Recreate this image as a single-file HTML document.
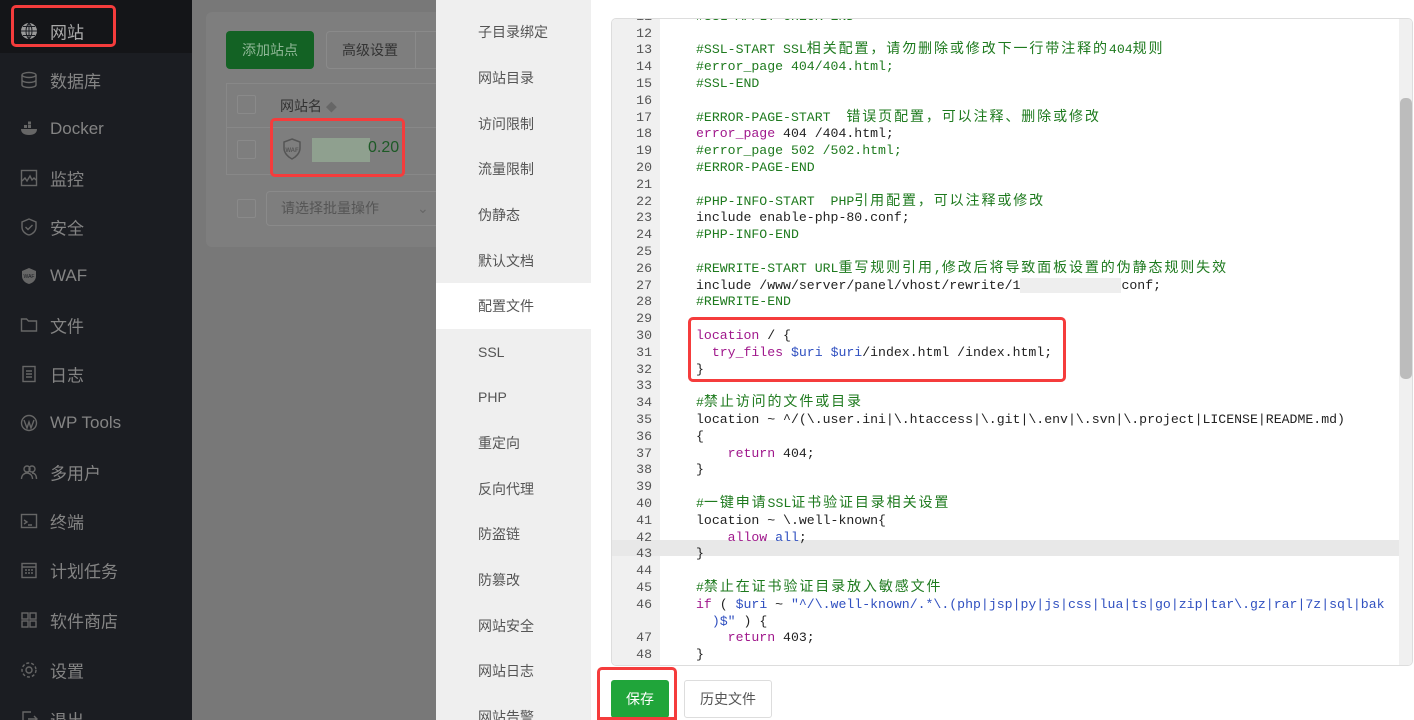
<!DOCTYPE html>
<html style="width:1414px;height:720px;overflow:hidden"><head><meta charset="utf-8">
<style>
*{margin:0;padding:0;box-sizing:border-box}
html{background:#787878}
body{width:1414px;height:720px;overflow:hidden;position:relative;background:#787878;font-family:"Liberation Sans","Noto Sans CJK SC",sans-serif}
.abs{position:absolute}
#side{left:0;top:0;width:192px;height:720px;background:#1b1d22;overflow:hidden}
.si{position:absolute;left:0;width:192px;height:49px;color:#848484;font-size:17px}
.si span.t{position:absolute;left:50px;top:50%;transform:translateY(-50%);white-space:nowrap}
.si .ic{position:absolute;left:20px;top:50%;transform:translateY(-50%);width:18px;height:18px}
#card{left:206px;top:12px;width:240px;height:235px;background:#7e7e7e;border-radius:6px}
#drawer{left:436px;top:0;width:978px;height:720px;background:#fff}
#menu{left:436px;top:0;width:155px;height:720px;background:#efefef;overflow:hidden}
.mi{position:absolute;left:436px;width:155px;height:46px;font-size:14px;color:#555;padding-left:42px;line-height:46px;overflow:hidden}
#ed{left:611px;top:18px;width:802px;height:648px;border:1px solid #ddd;border-radius:5px;overflow:hidden;background:#fff}
#gut{left:0;top:0;width:48px;height:100%;background:#f0f0f0}
.ln{position:absolute;left:0;width:40px;text-align:right;font-family:"Liberation Mono",monospace;font-size:13.2px;color:#555;height:16.8px;line-height:16.8px}
.cl{position:absolute;left:84px;white-space:pre;font-family:"Liberation Mono","Noto Sans CJK SC",monospace;font-size:13.2px;color:#222;height:16.8px;line-height:16.8px}
.c{font-size:14px;letter-spacing:1.9px}
.g{color:#1e7a1e}.k{color:#a0188c}.v{color:#3050c0}
.red{position:absolute;border:3px solid #f53c3c;border-radius:5px}
</style></head><body>
<div id="side" class="abs">
 <div class="abs" style="left:0;top:0;width:192px;height:53px;background:#141518"></div>
 <div class="si" style="top:6px;color:#aaa"><svg class="ic" viewBox="0 0 18 18"><circle cx="9" cy="9" r="8" fill="#999"/><path d="M1 9h16M9 1v16M3 4.5h12M3 13.5h12M9 1c-4 4-4 12 0 16M9 1c4 4 4 12 0 16" stroke="#1b1d22" stroke-width="1" fill="none"/></svg><span class="t" style="color:#aaa">网站</span></div>
 <div class="si" style="top:55px"><svg class="ic" viewBox="0 0 18 18" fill="none" stroke="#666" stroke-width="1.4"><ellipse cx="9" cy="4" rx="7" ry="2.5"/><path d="M2 4v10c0 1.4 3 2.5 7 2.5s7-1.1 7-2.5V4M2 9c0 1.4 3 2.5 7 2.5s7-1.1 7-2.5"/></svg><span class="t">数据库</span></div>
 <div class="si" style="top:104px"><svg class="ic" viewBox="0 0 18 18"><path d="M1 9h16c0 4-3 6-8 6S1 13 1 9z" fill="#666"/><rect x="4" y="5" width="3" height="3" fill="#666"/><rect x="8" y="5" width="3" height="3" fill="#666"/><rect x="8" y="1.5" width="3" height="3" fill="#666"/></svg><span class="t">Docker</span></div>
 <div class="si" style="top:153px"><svg class="ic" viewBox="0 0 18 18" fill="none" stroke="#666" stroke-width="1.4"><rect x="1.5" y="1.5" width="15" height="15"/><path d="M2 12l3-3 2 3 3-5 2 4 2-2 2 2"/></svg><span class="t">监控</span></div>
 <div class="si" style="top:202px"><svg class="ic" viewBox="0 0 18 18" fill="none" stroke="#666" stroke-width="1.4"><path d="M9 1l7 3v5c0 4-3 7-7 8-4-1-7-4-7-8V4z"/><path d="M5.5 9l2.5 2.5 4.5-4.5"/></svg><span class="t">安全</span></div>
 <div class="si" style="top:251px"><svg class="ic" viewBox="0 0 18 18"><path d="M9 1l7 3v5c0 4-3 7-7 8-4-1-7-4-7-8V4z" fill="#666"/><text x="9" y="11" font-size="5" fill="#1b1d22" text-anchor="middle" font-family="Liberation Sans">WAF</text></svg><span class="t">WAF</span></div>
 <div class="si" style="top:300px"><svg class="ic" viewBox="0 0 18 18" fill="none" stroke="#666" stroke-width="1.4"><path d="M1.5 3h5l2 2h8v10h-15z"/></svg><span class="t">文件</span></div>
 <div class="si" style="top:349px"><svg class="ic" viewBox="0 0 18 18" fill="none" stroke="#666" stroke-width="1.4"><rect x="3" y="1.5" width="12" height="15"/><path d="M6 6h6M6 9h6M6 12h6"/></svg><span class="t">日志</span></div>
 <div class="si" style="top:398px"><svg class="ic" viewBox="0 0 18 18" fill="none" stroke="#666" stroke-width="1.4"><circle cx="9" cy="9" r="7.5"/><path d="M4 6l3 8 2-6 2 6 3-8"/></svg><span class="t">WP Tools</span></div>
 <div class="si" style="top:447px"><svg class="ic" viewBox="0 0 18 18" fill="none" stroke="#666" stroke-width="1.4"><circle cx="7" cy="6" r="3"/><circle cx="12" cy="6" r="3"/><path d="M1.5 16c0-4 3-6 5.5-6s5.5 2 5.5 6M12 10c2.5 0 4.5 2 4.5 6"/></svg><span class="t">多用户</span></div>
 <div class="si" style="top:496px"><svg class="ic" viewBox="0 0 18 18" fill="none" stroke="#666" stroke-width="1.4"><rect x="1.5" y="2.5" width="15" height="13"/><path d="M4 8l3 2-3 2M8 13h4"/></svg><span class="t">终端</span></div>
 <div class="si" style="top:545px"><svg class="ic" viewBox="0 0 18 18" fill="none" stroke="#666" stroke-width="1.4"><rect x="2" y="2.5" width="14" height="14"/><path d="M2 6h14M5 9h2M8 9h2M11 9h2M5 12h2M8 12h2M11 12h2"/></svg><span class="t">计划任务</span></div>
 <div class="si" style="top:595px"><svg class="ic" viewBox="0 0 18 18" fill="none" stroke="#666" stroke-width="1.4"><rect x="2" y="2" width="6" height="6"/><rect x="10" y="2" width="6" height="6"/><rect x="2" y="10" width="6" height="6"/><rect x="10" y="10" width="6" height="6"/></svg><span class="t">软件商店</span></div>
 <div class="si" style="top:645px"><svg class="ic" viewBox="0 0 18 18" fill="none" stroke="#666" stroke-width="1.4"><circle cx="9" cy="9" r="3"/><circle cx="9" cy="9" r="7" stroke-dasharray="3 2"/></svg><span class="t">设置</span></div>
 <div class="si" style="top:694px"><svg class="ic" viewBox="0 0 18 18" fill="none" stroke="#666" stroke-width="1.4"><path d="M11 2H3v14h8M8 9h9M14 6l3 3-3 3"/></svg><span class="t">退出</span></div>
</div>
<div class="red" style="left:11px;top:5px;width:105px;height:42px"></div>

<div id="card" class="abs"></div>
<div class="abs" style="left:226px;top:31px;width:88px;height:38px;background:#136224;border-radius:4px;color:#8fb796;font-size:14px;line-height:38px;text-align:center">添加站点</div>
<div class="abs" style="left:326px;top:31px;width:120px;height:38px;border:1px solid #8a8a8a;border-radius:4px;color:#333;font-size:14px;line-height:36px;padding-left:15px">高级设置<span style="position:absolute;left:88px;top:0;height:36px;border-left:1px solid #8a8a8a"></span></div>
<div class="abs" style="left:226px;top:83px;width:220px;height:92px;border:1px solid #888"></div>
<div class="abs" style="left:226px;top:127px;width:220px;height:1px;background:#888"></div>
<div class="abs" style="left:237px;top:95px;width:19px;height:19px;border:1px solid #8a8a8a;border-radius:2px"></div>
<div class="abs" style="left:280px;top:96px;font-size:14px;color:#333">网站名 <span style="color:#666;font-size:11px">◆</span></div>
<div class="abs" style="left:237px;top:140px;width:19px;height:19px;border:1px solid #8a8a8a;border-radius:2px"></div>
<svg class="abs" style="left:282px;top:138px" width="20" height="22" viewBox="0 0 20 22"><path d="M10 1l8 3v6c0 5-4 9-8 11-4-2-8-6-8-11V4z" fill="none" stroke="#555" stroke-width="1.5"/><text x="10" y="14" font-size="6" fill="#555" text-anchor="middle" font-family="Liberation Sans" font-weight="bold">WAF</text></svg>
<div class="abs" style="left:312px;top:138px;width:58px;height:24px;background:#8fa08f"></div>
<div class="abs" style="left:368px;top:139px;font-size:16px;color:#1d5a26">0.20</div>
<div class="red" style="left:270px;top:118px;width:135px;height:59px"></div>
<div class="abs" style="left:237px;top:199px;width:19px;height:19px;border:1px solid #8a8a8a;border-radius:2px"></div>
<div class="abs" style="left:266px;top:191px;width:180px;height:35px;border:1px solid #8a8a8a;border-radius:4px;color:#555;font-size:14px;line-height:33px;padding-left:14px">请选择批量操作<span style="position:absolute;left:150px;color:#666">⌄</span></div>

<div id="drawer" class="abs"></div>
<div id="menu" class="abs"></div>
<div class="mi" style="top:9px">子目录绑定</div>
<div class="mi" style="top:55px">网站目录</div>
<div class="mi" style="top:101px">访问限制</div>
<div class="mi" style="top:146px">流量限制</div>
<div class="mi" style="top:192px">伪静态</div>
<div class="mi" style="top:238px">默认文档</div>
<div class="mi" style="top:283px;background:#fff">配置文件</div>
<div class="mi" style="top:329px">SSL</div>
<div class="mi" style="top:374px">PHP</div>
<div class="mi" style="top:420px">重定向</div>
<div class="mi" style="top:466px">反向代理</div>
<div class="mi" style="top:511px">防盗链</div>
<div class="mi" style="top:557px">防篡改</div>
<div class="mi" style="top:603px">网站安全</div>
<div class="mi" style="top:648px">网站日志</div>
<div class="mi" style="top:694px;height:26px">网站告警</div>

<div id="ed" class="abs">
 <div id="gut" class="abs"></div>
 <div class="abs" style="left:0;top:520.6px;width:787px;height:16.8px;background:#e8e8e8"></div>
 <div class="abs" style="left:787px;top:0;width:14px;height:648px;background:#f0f0f0"></div>
 <div class="abs" style="left:788px;top:79px;width:12px;height:281px;background:#bcbcbc;border-radius:5px"></div>
 <div class="ln" style="top:-10px">11</div><div class="cl g" style="top:-10px">#SSL-APPLY-CHECK-END</div>
 <div class="ln" style="top:6.6px">12</div>
 <div class="ln" style="top:23.4px">13</div><div class="cl g" style="top:23.4px">#SSL-START SSL<span class="c">相关配置，请勿删除或修改下一行带注释的</span>404<span class="c">规则</span></div>
 <div class="ln" style="top:40.2px">14</div><div class="cl g" style="top:40.2px">#error_page 404/404.html;</div>
 <div class="ln" style="top:57px">15</div><div class="cl g" style="top:57px">#SSL-END</div>
 <div class="ln" style="top:73.8px">16</div>
 <div class="ln" style="top:90.6px">17</div><div class="cl g" style="top:90.6px">#ERROR-PAGE-START  <span class="c">错误页配置，可以注释、删除或修改</span></div>
 <div class="ln" style="top:107.4px">18</div><div class="cl" style="top:107.4px"><span class="k">error_page</span> 404 /404.html;</div>
 <div class="ln" style="top:124.2px">19</div><div class="cl g" style="top:124.2px">#error_page 502 /502.html;</div>
 <div class="ln" style="top:141px">20</div><div class="cl g" style="top:141px">#ERROR-PAGE-END</div>
 <div class="ln" style="top:157.8px">21</div>
 <div class="ln" style="top:174.6px">22</div><div class="cl g" style="top:174.6px">#PHP-INFO-START  PHP<span class="c">引用配置，可以注释或修改</span></div>
 <div class="ln" style="top:191.4px">23</div><div class="cl" style="top:191.4px">include enable-php-80.conf;</div>
 <div class="ln" style="top:208.2px">24</div><div class="cl g" style="top:208.2px">#PHP-INFO-END</div>
 <div class="ln" style="top:225px">25</div>
 <div class="ln" style="top:241.8px">26</div><div class="cl g" style="top:241.8px">#REWRITE-START URL<span class="c">重写规则引用</span>,<span class="c">修改后将导致面板设置的伪静态规则失效</span></div>
 <div class="ln" style="top:258.6px">27</div><div class="cl" style="top:258.6px">include /www/server/panel/vhost/rewrite/1<span style="display:inline-block;width:101px;height:15px;background:#eeeeee;vertical-align:middle"></span>conf;</div>
 <div class="ln" style="top:275.4px">28</div><div class="cl g" style="top:275.4px">#REWRITE-END</div>
 <div class="ln" style="top:292.2px">29</div>
 <div class="ln" style="top:309px">30</div><div class="cl" style="top:309px"><span class="k">location</span> / {</div>
 <div class="ln" style="top:325.8px">31</div><div class="cl" style="top:325.8px">  <span class="k">try_files</span> <span class="v">$uri</span> <span class="v">$uri</span>/index.html /index.html;</div>
 <div class="ln" style="top:342.6px">32</div><div class="cl" style="top:342.6px">}</div>
 <div class="ln" style="top:359.4px">33</div>
 <div class="ln" style="top:376.2px">34</div><div class="cl g" style="top:376.2px">#<span class="c">禁止访问的文件或目录</span></div>
 <div class="ln" style="top:393px">35</div><div class="cl" style="top:393px">location ~ ^/(\.user.ini|\.htaccess|\.git|\.env|\.svn|\.project|LICENSE|README.md)</div>
 <div class="ln" style="top:409.8px">36</div><div class="cl" style="top:409.8px">{</div>
 <div class="ln" style="top:426.6px">37</div><div class="cl" style="top:426.6px">    <span class="k">return</span> 404;</div>
 <div class="ln" style="top:443.4px">38</div><div class="cl" style="top:443.4px">}</div>
 <div class="ln" style="top:460.2px">39</div>
 <div class="ln" style="top:477px">40</div><div class="cl g" style="top:477px">#<span class="c">一键申请</span>SSL<span class="c">证书验证目录相关设置</span></div>
 <div class="ln" style="top:493.8px">41</div><div class="cl" style="top:493.8px">location ~ \.well-known{</div>
 <div class="ln" style="top:510.6px">42</div><div class="cl" style="top:510.6px">    <span class="k">allow</span> <span class="v">all</span>;</div>
 <div class="ln" style="top:527.4px">43</div><div class="cl" style="top:527.4px">}</div>
 <div class="ln" style="top:544.2px">44</div>
 <div class="ln" style="top:561px">45</div><div class="cl g" style="top:561px">#<span class="c">禁止在证书验证目录放入敏感文件</span></div>
 <div class="ln" style="top:577.8px">46</div><div class="cl" style="top:577.8px"><span class="k">if</span> ( <span class="v">$uri</span> ~ <span class="v">"^/\.well-known/.*\.(php|jsp|py|js|css|lua|ts|go|zip|tar\.gz|rar|7z|sql|bak</span></div>
 <div class="cl" style="top:594.6px"><span class="v">  )$"</span> ) {</div>
 <div class="ln" style="top:611.4px">47</div><div class="cl" style="top:611.4px">    <span class="k">return</span> 403;</div>
 <div class="ln" style="top:628.2px">48</div><div class="cl" style="top:628.2px">}</div>
</div>
<div class="red" style="left:688px;top:317px;width:378px;height:65px"></div>

<div class="abs" style="left:611px;top:680px;width:58px;height:38px;background:#20a53a;border-radius:3px;color:#fff;font-size:14px;line-height:38px;text-align:center">保存</div>
<div class="abs" style="left:684px;top:680px;width:88px;height:38px;border:1px solid #ddd;border-radius:3px;color:#555;font-size:14px;line-height:36px;text-align:center">历史文件</div>
<div class="red" style="left:597px;top:667px;width:80px;height:53px;border-bottom-left-radius:0;border-bottom-right-radius:0"></div>
</body></html>
